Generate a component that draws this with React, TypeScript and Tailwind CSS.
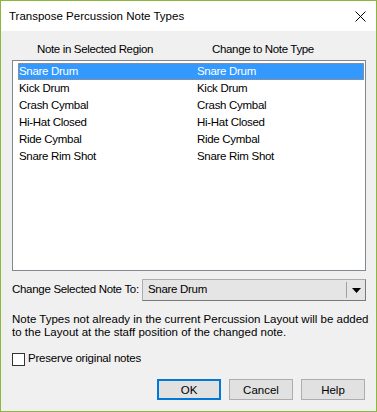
import React from "react";

const rows = [
  ["Snare Drum", "Snare Drum"],
  ["Kick Drum", "Kick Drum"],
  ["Crash Cymbal", "Crash Cymbal"],
  ["Hi-Hat Closed", "Hi-Hat Closed"],
  ["Ride Cymbal", "Ride Cymbal"],
  ["Snare Rim Shot", "Snare Rim Shot"],
];

export default function App() {
  return (
    <div
      className="w-[377px] h-[412px] border border-[#8ab83f] bg-[#f0f0f0] flex flex-col text-[11.5px] text-black overflow-hidden"
      style={{ fontFamily: '"Liberation Sans", Arial, sans-serif' }}
    >
      {/* title bar */}
      <div className="h-[30px] bg-white flex items-center pl-[8px] pr-[9px] shrink-0">
        <span className="flex-1 leading-[16px] whitespace-nowrap">Transpose Percussion Note Types</span>
        <svg width="11" height="11" viewBox="0 0 11 11" className="mr-[1px]">
          <path d="M0.5 0.5 L10.5 10.5 M10.5 0.5 L0.5 10.5" stroke="#000" strokeWidth="1" />
        </svg>
      </div>

      {/* headers */}
      <div className="flex pl-[11px] pt-[10px] h-[26px] leading-[16px] shrink-0 whitespace-nowrap tracking-[-0.35px]">
        <div className="w-[166px] text-center">Note in Selected Region</div>
        <div className="w-[170px] text-center">Change to Note Type</div>
      </div>

      {/* list */}
      <div className="ml-[11px] mt-[3px] w-[354px] h-[211px] border border-[#828790] bg-white pt-[2px] pl-[5px] pr-[1px] shrink-0 tracking-[-0.3px]">
        {rows.map(([a, b], i) => (
          <div
            key={i}
            className={
              "flex h-[17px] items-center leading-[17px] whitespace-nowrap " +
              (i === 0 ? "bg-[#3399ff] text-white border border-dotted border-[#cc8844]" : "border border-transparent")
            }
          >
            <div className="w-[178px]">{a}</div>
            <div>{b}</div>
          </div>
        ))}
      </div>

      {/* dropdown row */}
      <div className="flex items-center mt-[8px] pl-[11px] h-[22px] shrink-0 tracking-[-0.3px]">
        <div className="w-[130px] whitespace-nowrap">Change Selected Note To:</div>
        <div className="w-[224px] h-[22px] flex items-center bg-[#e5e5e5] border border-[#adadad] border-r-[#7a7a7a] border-b-[#7a7a7a]">
          <span className="flex-1 pl-[5px]">Snare Drum</span>
          <div className="w-[1px] h-[16px] bg-[#a0a0a0]" />
          <div className="w-[18px] flex items-center justify-center">
            <svg width="9" height="5" viewBox="0 0 9 5">
              <path d="M0 0 H9 L4.5 5 Z" fill="#000" />
            </svg>
          </div>
        </div>
      </div>

      {/* note paragraph */}
      <div className="mt-[12px] pl-[11px] pr-[2px] leading-[13px] shrink-0">
        Note Types not already in the current Percussion Layout will be added to the Layout at the staff position of the changed note.
      </div>

      {/* checkbox */}
      <div className="flex items-center mt-[12px] pl-[11px] h-[16px] shrink-0 tracking-[-0.2px]">
        <div className="w-[13px] h-[13px] border border-[#333333] bg-white" />
        <span className="ml-[3px]">Preserve original notes</span>
      </div>

      {/* buttons */}
      <div className="flex justify-end gap-[8px] mt-[12px] pr-[11px] shrink-0">
        <button className="w-[64px] h-[21px] bg-[#e1e1e1] border-2 border-[#0078d7] leading-[16px]">OK</button>
        <button className="w-[64px] h-[21px] bg-[#e1e1e1] border border-[#adadad] leading-[16px]">Cancel</button>
        <button className="w-[64px] h-[21px] bg-[#e1e1e1] border border-[#adadad] leading-[16px]">Help</button>
      </div>
    </div>
  );
}
